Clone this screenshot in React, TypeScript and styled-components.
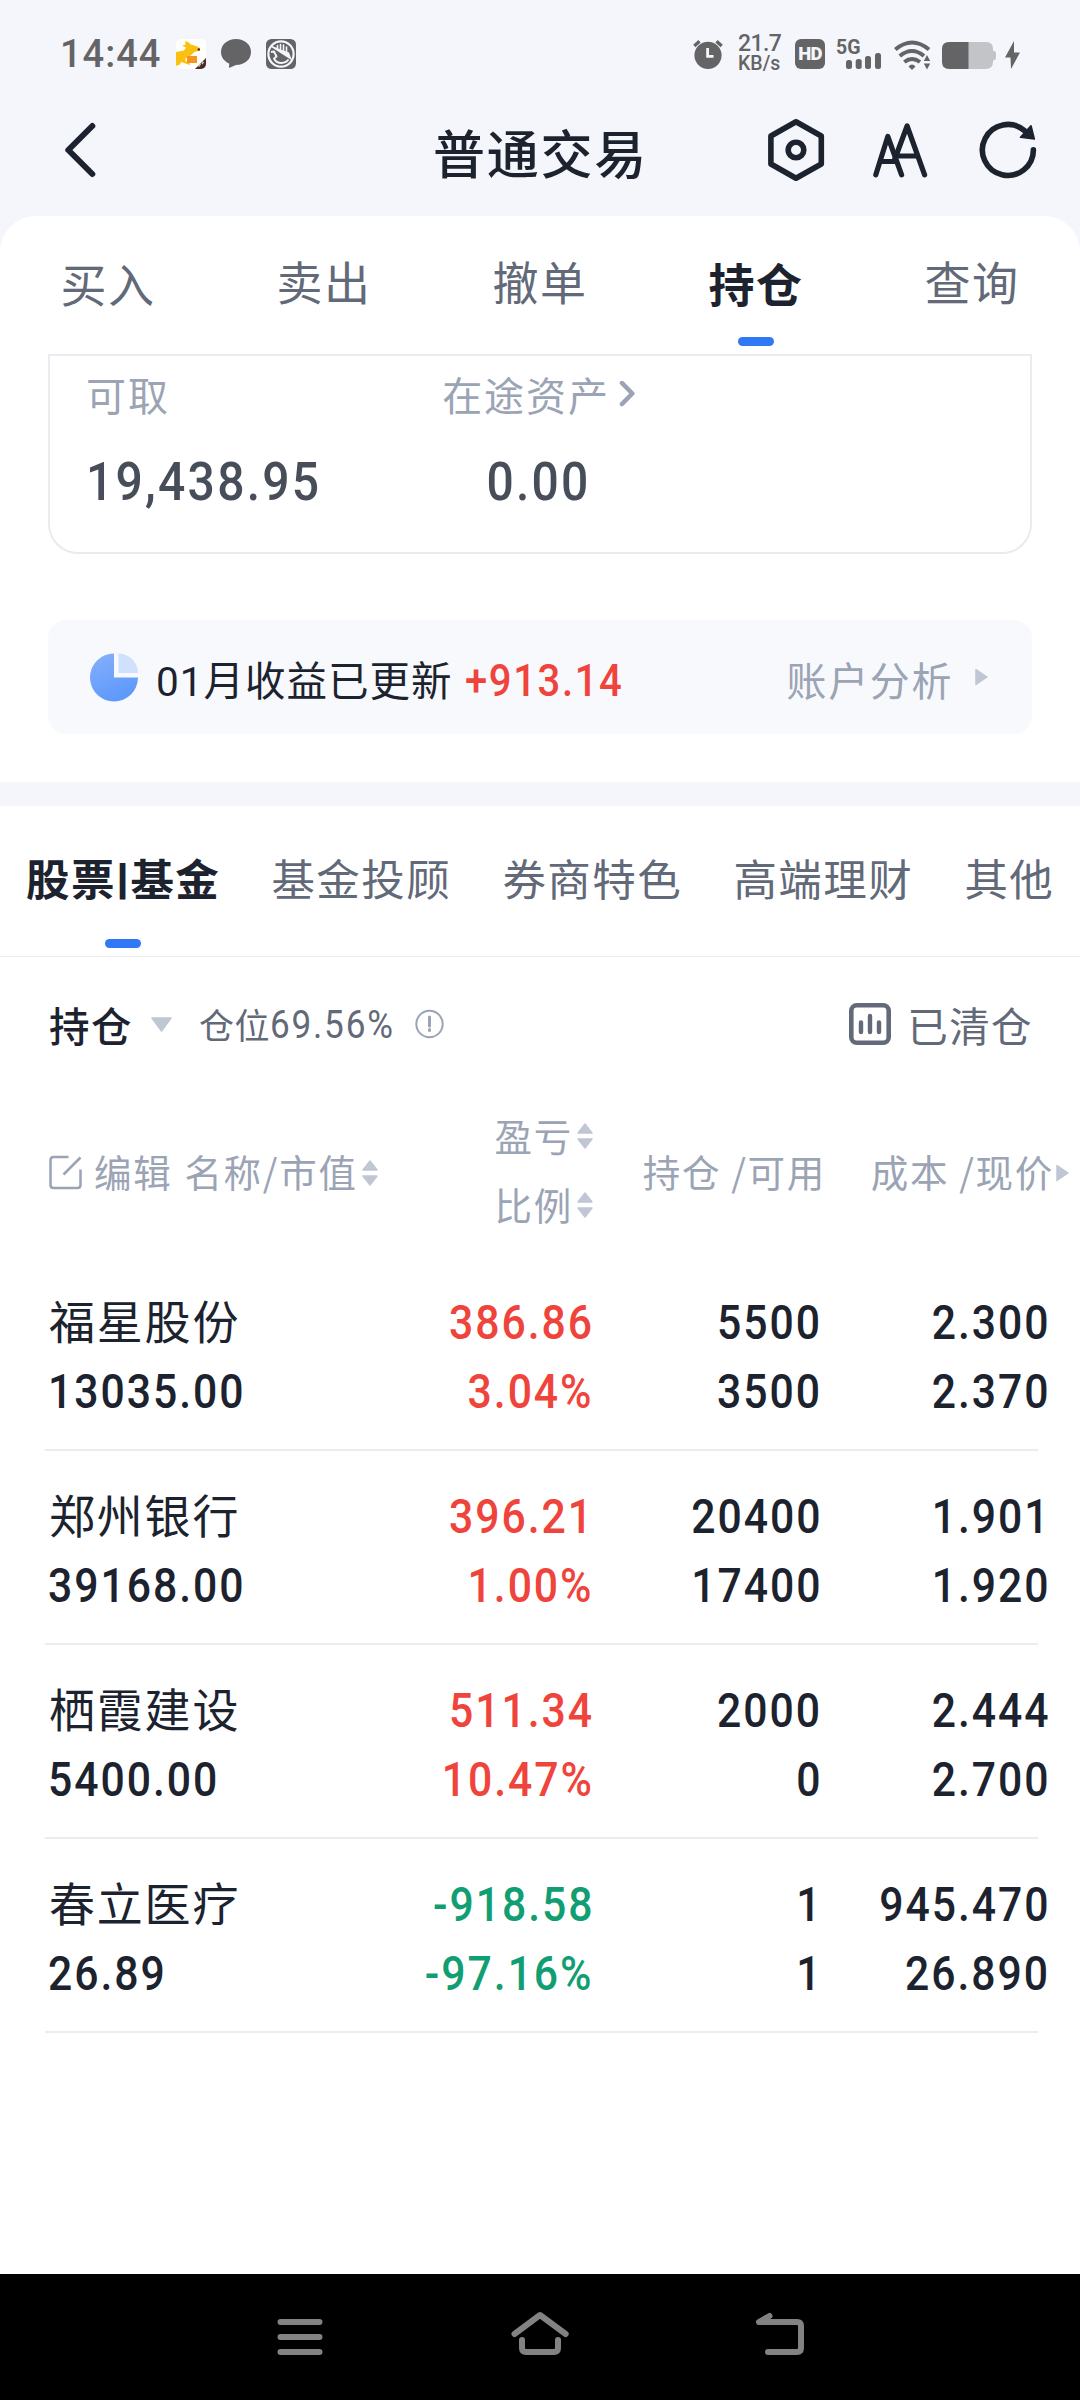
import React from "react";
import styled, { createGlobalStyle } from "styled-components";

const CJK = '"Noto Sans CJK SC", "Noto Sans", sans-serif';
const NUM = 'Roboto, "Noto Sans CJK SC", sans-serif';

const C = {
  bg: "#f4f6fb",
  ink: "#1c232f",
  mid: "#626978",
  soft: "#9ba4b5",
  faint: "#c0c6d3",
  line: "#ebecee",
  blue: "#3078f6",
  red: "#ef443c",
  green: "#119e72",
  status: "#646466",
};

const GlobalStyle = createGlobalStyle`
  * { box-sizing: border-box; }
  body { margin: 0; background: ${C.bg}; }
  svg { display: block; flex: none; }
`;

const Screen = styled.div`
  width: 1080px;
  height: 2400px;
  display: flex;
  flex-direction: column;
  overflow: hidden;
  background: ${C.bg};
  color: ${C.ink};
  font-family: ${CJK};
  white-space: nowrap;
`;

/* Narrow figures: Roboto condensed horizontally, anchored on one side. */
const Figure = styled.span<{ $from?: "left" | "center" | "right" }>`
  display: inline-block;
  transform: scaleX(0.89);
  transform-origin: ${(p) => p.$from ?? "left"} center;
`;

const StatusBar = styled.div`
  height: 108px;
  padding: 0 60px;
  display: flex;
  align-items: center;
  justify-content: space-between;
  color: ${C.status};
  font-family: ${NUM};
`;
const StatusGroup = styled.div`
  display: flex;
  align-items: center;
`;
const Time = styled.span`
  width: 116px;
  font-size: 38px;
  font-weight: 500;
  line-height: 44px;
  letter-spacing: 1px;
`;
const NoticeIcons = styled.div`
  display: flex;
  gap: 15px;
`;
const Speed = styled.div`
  width: 44px;
  margin: 0 13px 0 15px;
  display: flex;
  flex-direction: column;
  font-weight: 500;
  line-height: 20px;
`;
const SpeedValue = styled.span`
  font-size: 23px;
  letter-spacing: -0.6px;
`;
const SpeedUnit = styled.span`
  font-size: 19.5px;
`;
const HdBadge = styled.span`
  width: 30px;
  height: 30px;
  margin-right: 11px;
  border-radius: 6px;
  background: ${C.status};
  color: ${C.bg};
  font-size: 18.5px;
  font-weight: 900;
  line-height: 31px;
  text-align: center;
  letter-spacing: -0.8px;
`;

const Header = styled.header`
  height: 108px;
  padding: 0 40px 24px 60px;
  display: grid;
  grid-template-columns: 1fr auto 1fr;
  align-items: center;
`;
const Title = styled.h1`
  margin: 0;
  padding: 3px 19px 0 0;
  font-size: 52px;
  font-weight: 500;
  line-height: 64px;
  letter-spacing: 1.8px;
`;
const HeaderActions = styled.div`
  display: flex;
  justify-content: flex-end;
  gap: 46px;
`;

const Sheet = styled.main`
  flex: 1;
  border-radius: 36px 36px 0 0;
  background: #fff;
`;

const Tabs = styled.nav`
  height: 138px;
  display: grid;
  grid-template-columns: repeat(5, 1fr);
`;
const Tab = styled.div<{ $active?: boolean; $low?: boolean }>`
  padding-top: ${(p) => (p.$low ? 34 : 32)}px;
  display: flex;
  flex-direction: column;
  align-items: center;
  gap: 23px;
  font-size: 46px;
  line-height: 64px;
  letter-spacing: 1.6px;
  font-weight: ${(p) => (p.$active ? 700 : 400)};
  color: ${(p) => (p.$active ? C.ink : C.mid)};
`;
const Indicator = styled.i`
  width: 36px;
  height: 9px;
  border-radius: 5px;
  background: ${C.blue};
`;

const AssetCard = styled.section`
  height: 200px;
  margin: 0 48px;
  padding-top: 14px;
  border: 2px solid #e8ebef;
  border-radius: 0 0 30px 30px;
  display: grid;
  grid-template-columns: repeat(3, 1fr);
`;
const Asset = styled.div<{ $center?: boolean }>`
  padding-left: ${(p) => (p.$center ? 0 : 36)}px;
  padding-right: ${(p) => (p.$center ? 3 : 0)}px;
  display: flex;
  flex-direction: column;
  align-items: ${(p) => (p.$center ? "center" : "flex-start")};
  gap: 34px;
`;
const AssetLabel = styled.div`
  display: flex;
  align-items: center;
  gap: 9px;
  font-size: 40px;
  line-height: 48px;
  letter-spacing: 1.9px;
  color: ${C.soft};
`;
const AssetValue = styled.div`
  font: 500 54px/60px ${NUM};
  letter-spacing: 2.5px;
  color: #474e59;
`;

const Banner = styled.section`
  height: 114px;
  margin: 66px 48px 48px;
  padding: 0 44px 0 41px;
  border-radius: 18px;
  background: #f8f9fc;
  display: flex;
  align-items: center;
`;
const BannerText = styled.span`
  margin: 9px 0 0 18px;
  font: 400 40.5px/56px ${NUM};
  letter-spacing: 1px;
`;
const Profit = styled.span`
  flex: 1;
  margin: 8px 0 0 12px;
  font: 500 45px/56px ${NUM};
  letter-spacing: 1.8px;
  color: ${C.red};
`;
const BannerLink = styled.span`
  margin: 3px 22px 0 0;
  font-size: 40px;
  line-height: 56px;
  letter-spacing: 1.6px;
  color: ${C.soft};
`;

const Gap = styled.div`
  height: 24px;
  background: ${C.bg};
`;

const SubTabs = styled.nav`
  height: 151px;
  padding: 40px 0 0 26px;
  border-bottom: 1px solid #e9ebee;
  display: flex;
  gap: 51px;
`;
const SubTab = styled.div<{ $active?: boolean }>`
  display: flex;
  flex-direction: column;
  align-items: center;
  gap: 29px;
  font-size: 43.5px;
  line-height: 64px;
  letter-spacing: 1.5px;
  font-weight: ${(p) => (p.$active ? 700 : 400)};
  color: ${(p) => (p.$active ? C.ink : C.mid)};
`;
const Bar = styled.span`
  padding: 0 1.2px;
  font: 900 41px/1 Roboto, sans-serif;
  -webkit-text-stroke: 2px ${C.ink};
  vertical-align: 3px;
`;

const FilterRow = styled.div`
  height: 134px;
  padding: 0 47px 0 49px;
  display: flex;
  align-items: center;
`;
const FilterName = styled.span`
  margin: 2px 18px 0 0;
  font-size: 40.5px;
  line-height: 56px;
  letter-spacing: 1.5px;
  font-weight: 500;
`;
const Position = styled.span`
  flex: 1;
  margin-left: 27px;
  display: flex;
  align-items: center;
  font-size: 35px;
  line-height: 56px;
  letter-spacing: 0.6px;
  color: ${C.mid};
`;
const PositionValue = styled.span`
  width: 145px;
  margin-top: 2px;
  font: 400 39.5px/56px ${NUM};
  letter-spacing: 2px;
`;
const Cleared = styled.span`
  margin: 2px 0 0 16px;
  font-size: 40.5px;
  line-height: 56px;
  letter-spacing: 1.4px;
  color: ${C.mid};
`;

const TableHead = styled.div`
  height: 166px;
  padding: 0 0 7px 48px;
  display: grid;
  grid-template-columns: 340px 205px 233px 243px;
  align-items: center;
  font-size: 37.5px;
  line-height: 69px;
  letter-spacing: 1.7px;
  color: ${C.soft};
`;
const HeadCell = styled.div<{ $end?: boolean; $gap?: number }>`
  display: flex;
  align-items: center;
  justify-content: ${(p) => (p.$end ? "flex-end" : "flex-start")};
  gap: ${(p) => p.$gap ?? 4}px;
`;
const HeadStack = styled.div`
  margin-bottom: 4px;
`;
const IconDrop = styled.span<{ $y: number }>`
  padding-top: ${(p) => p.$y}px;
`;

const Row = styled.div`
  height: 194px;
  margin: 0 42px 0 45px;
  padding: 31px 0 0 3px;
  border-bottom: 2px solid ${C.line};
  display: grid;
  grid-template-columns: 340px 206px 228px 228px;
`;
const Cell = styled.div<{ $tone?: string; $end?: boolean }>`
  display: flex;
  flex-direction: column;
  align-items: ${(p) => (p.$end ? "flex-end" : "flex-start")};
  font: 500 48px/69px ${NUM};
  letter-spacing: 2.2px;
  color: ${(p) => p.$tone ?? C.ink};
`;
const StockName = styled.span`
  margin: 0 0 6px 1px;
  font: 400 46px/63px ${CJK};
  letter-spacing: 1.8px;
`;

const NavBar = styled.footer`
  height: 126px;
  background: #000;
  display: flex;
  align-items: center;
  justify-content: center;
  gap: 180px;
`;

const AppNoticeIcon = () => (
  <svg width="30" height="30" viewBox="0 0 30 30">
    <rect width="30" height="30" rx="5" fill="#fff" />
    <path d="M0 13 L8 11.500 L10 8.500 L6 6.500 L9.500 5.500 L9 2 Q13 2.500 15 5.500 L20 7 L24 9 L24 11.500 L18.500 13 L14 17 L9.500 19.500 L9.500 22 L14 24.500 L14 26 L5 23 L4 25.500 L0 27 Z" fill="#fbc111" />
    <rect x="11" y="17" width="10" height="7" fill="#f7941d" />
    <circle cx="22.800" cy="10.500" r="1.200" fill="#4a2c20" />
    <path d="M30 19 V25 A5 5 0 0 1 25 30 H19 Z" fill="#4a2c22" />
    <path d="M22.500 27.500 l2 -2.500 M26 25 l1.500 -2" stroke="#d9c6b8" strokeWidth="1.400" />
  </svg>
);
const ChatIcon = () => (
  <svg width="30" height="30" viewBox="0 0 30 30">
    <path d="M15 0 C23.500 0 30 5.500 30 13 C30 20.500 23.500 26 15 26 L8 29 L8.200 24.600 C3.200 22.500 0 18 0 13 C0 5.500 6.500 0 15 0 Z" fill={C.status} />
  </svg>
);
const HandIcon = () => (
  <svg width="30" height="30" viewBox="0 0 30 30" fill="none">
    <rect width="30" height="30" rx="5.500" fill={C.status} />
    <circle cx="15" cy="15" r="12.600" stroke="#f4f6fb" strokeWidth="2.200" />
    <path d="M5.500 7.500 L24.500 19.500 L22.500 14 L15 11.500 Z" fill="#f4f6fb" stroke="#f4f6fb" strokeWidth="1.400" />
    <path d="M11.500 10 V6.500 M14.500 12 V5.500 M17.500 14 V6 M20.500 15.500 V8" stroke="#f4f6fb" strokeWidth="1.600" strokeLinecap="round" />
    <path d="M5 13 L8 12.500 L10.500 17.500 L8 19.500 Q10 24 15.500 24 Q20.500 23.500 22.500 20.500" stroke="#f4f6fb" strokeWidth="1.900" strokeLinejoin="round" />
  </svg>
);
const AlarmIcon = () => (
  <svg width="30" height="30" viewBox="0 0 30 30" fill="none">
    <circle cx="15" cy="16.300" r="13.600" fill={C.status} />
    <path d="M1.300 7 L6.500 2.200 M28.700 7 L23.500 2.200" stroke={C.status} strokeWidth="3.400" />
    <path d="M14.600 9 V17.300 H20.500" stroke={C.bg} strokeWidth="2.800" />
  </svg>
);
const SignalIcon = () => (
  <svg width="46" height="36" viewBox="836 36 46 36" fill={C.status}>
    <text x="836" y="54" fontFamily="Roboto, sans-serif" fontWeight="700" fontSize="21" textLength="24.500" lengthAdjust="spacingAndGlyphs">5G</text>
    <rect x="846" y="60" width="6" height="9" rx="2.500" />
    <rect x="855.700" y="59" width="6" height="10" rx="2.500" />
    <rect x="865" y="56" width="6" height="13" rx="2.500" />
    <rect x="875" y="53" width="6" height="16" rx="2.500" />
  </svg>
);
const WifiIcon = () => (
  <svg width="38" height="36" viewBox="894 36 38 36" fill="none">
    <g stroke={C.status} strokeWidth="4">
      <path d="M895.300 49.500 Q912 35.500 929 49.500" />
      <path d="M899.800 56 Q912 46 924 56" />
      <path d="M904.300 62 Q912 56 920 62" />
    </g>
    <path d="M908.500 66.500 Q912 62.500 915.500 66.500 L912 70 Z" fill={C.status} />
    <path d="M923.800 61 L927 55 L930.200 61 Z M923.800 63.500 L927 69.500 L930.200 63.500 Z" fill={C.status} />
  </svg>
);
const BatteryIcon = () => (
  <svg width="54" height="36" viewBox="942 36 54 36">
    <path d="M968 42 H986 Q993 42 993 49 V50.500 Q996 51 996 53.500 V57.500 Q996 60 993 60.500 V62 Q993 69 986 69 H968 Z" fill="#c3c4c8" />
    <path d="M968.500 42 H949 Q942 42 942 49 V62 Q942 69 949 69 H968.500 Z" fill={C.status} />
  </svg>
);
const BoltIcon = () => (
  <svg width="15" height="36" viewBox="1005 36 15 36">
    <path d="M1014 41 L1005 57.500 H1010.500 L1011 69 L1020 52.500 H1014 Z" fill={C.status} />
  </svg>
);

const BackIcon = () => (
  <svg width="40" height="64" viewBox="60 118 40 64" fill="none">
    <path d="M92.300 126 L68.300 150 L92.300 174" stroke={C.ink} strokeWidth="6" strokeLinecap="round" strokeLinejoin="round" />
  </svg>
);
const SettingsIcon = () => (
  <svg width="60" height="64" viewBox="766 118 60 64" fill="none" stroke={C.ink} strokeWidth="5.600" strokeLinejoin="round">
    <path d="M796 121.800 L821.300 136 V164 L796 178.200 L770.900 164 V136 Z" />
    <circle cx="796" cy="150" r="7.800" />
  </svg>
);
const FontSizeIcon = () => (
  <svg width="58" height="64" viewBox="872 118 58 64" fill="none" stroke={C.ink} strokeWidth="5.200" strokeLinecap="round" strokeLinejoin="round">
    <path d="M875.800 174.800 L887.800 136.500 L901.600 174.800 M880.500 161.500 H896" />
    <path d="M894.500 160 L907.100 126 L924.600 174.800 M897.500 156 H917.500" />
  </svg>
);
const RefreshIcon = () => (
  <svg width="64" height="64" viewBox="976 118 64 64" fill="none">
    <path d="M1033.400 149.800 A25.500 25.500 0 1 1 1024.500 130.600" stroke={C.ink} strokeWidth="5.600" strokeLinecap="round" />
    <path d="M1031 125.800 L1034.300 139 L1020.500 137.300 Z" fill={C.ink} stroke={C.ink} strokeWidth="1.600" strokeLinejoin="round" />
  </svg>
);

const ChevronIcon = () => (
  <svg width="16" height="26" viewBox="0 0 16 26" fill="none">
    <path d="M3 2 L13.300 12.500 L3 23" stroke={C.soft} strokeWidth="4.600" strokeLinecap="round" strokeLinejoin="round" />
  </svg>
);
const PieIcon = () => (
  <svg width="49" height="49" viewBox="0 0 49 49">
    <defs>
      <linearGradient id="pie" x1="0" y1="0" x2="0.400" y2="1">
        <stop offset="0" stopColor="#86b0fb" />
        <stop offset="1" stopColor="#5f99fb" />
      </linearGradient>
    </defs>
    <path d="M25 0.500 A24 24 0 1 0 49 24.500 H25 Z" fill="url(#pie)" />
    <path d="M29.500 0.500 A19.500 19.500 0 0 1 49 20 H29.500 Z" fill="#d0e1fd" />
  </svg>
);
const RightTriangle = () => (
  <svg width="13" height="18" viewBox="0 0 13 18">
    <path d="M1 1.500 L12 9 L1 16.500 Z" fill={C.faint} stroke={C.faint} strokeWidth="1.500" strokeLinejoin="round" />
  </svg>
);
const DownTriangle = () => (
  <svg width="21" height="15" viewBox="0 0 21 15">
    <path d="M1 1 H20 L10.500 14 Z" fill={C.faint} stroke={C.faint} strokeWidth="1.500" strokeLinejoin="round" />
  </svg>
);
const SortIcon = () => (
  <svg width="16" height="26" viewBox="0 0 16 26" fill={C.faint} stroke={C.faint} strokeWidth="1.400" strokeLinejoin="round">
    <path d="M1 10 L8 1 L15 10 Z M1 16 L8 25 L15 16 Z" />
  </svg>
);
const InfoIcon = () => (
  <svg width="29" height="30" viewBox="0 0 29 30" fill="none" stroke={C.soft}>
    <circle cx="14.500" cy="15" r="13.200" strokeWidth="2" />
    <path d="M14.500 8 V17 M14.500 20.500 V21.500" strokeWidth="3" strokeLinecap="round" />
  </svg>
);
const ChartIcon = () => (
  <svg width="42" height="42" viewBox="0 0 42 42" fill="none" stroke={C.mid}>
    <rect x="2.300" y="2.300" width="37.400" height="37.400" rx="5.500" strokeWidth="4.600" />
    <path d="M12 19.500 V29 M21 13 V29 M30 19.500 V29" strokeWidth="4.400" strokeLinecap="round" />
  </svg>
);
const EditIcon = () => (
  <svg width="34" height="35" viewBox="0 0 34 35" fill="none" stroke={C.soft} strokeWidth="2.500">
    <path d="M20.500 2 H5.500 Q2.500 2 2.500 5 V30 Q2.500 33 5.500 33 H29.500 Q32.500 33 32.500 30 V14.500" />
    <path d="M15.500 19.500 L32.500 2.500" />
  </svg>
);

const MenuIcon = () => (
  <svg width="60" height="60" viewBox="270 2307 60 60" stroke="#828282" strokeWidth="6" strokeLinecap="round">
    <path d="M280.500 2322 H319.500 M280.500 2337 H319.500 M280.500 2352 H319.500" />
  </svg>
);
const HomeIcon = () => (
  <svg width="60" height="60" viewBox="510 2307 60 60" fill="none" stroke="#828282" strokeWidth="6" strokeLinecap="round" strokeLinejoin="round">
    <path d="M514.500 2334 L540 2315 L565.700 2334" />
    <path d="M522 2340 V2348 Q522 2352 526 2352 H554 Q558 2352 558 2348 V2340" />
  </svg>
);
const ReturnIcon = () => (
  <svg width="60" height="60" viewBox="750 2307 60 60" fill="none" stroke="#828282" strokeWidth="6" strokeLinecap="round" strokeLinejoin="round">
    <path d="M769.500 2316 L759 2322 H797 Q801 2322 801 2326 V2348 Q801 2352 797 2352 H768" />
  </svg>
);

const TABS = [
  { label: "买入", low: true },
  { label: "卖出" },
  { label: "撤单" },
  { label: "持仓", low: true, active: true },
  { label: "查询" },
];
const SUB_TABS = ["基金投顾", "券商特色", "高端理财", "其他"];

type Holding = {
  name: string;
  value: string;
  profit: string;
  ratio: string;
  held: string;
  usable: string;
  cost: string;
  price: string;
};
const HOLDINGS: Holding[] = [
  { name: "福星股份", value: "13035.00", profit: "386.86", ratio: "3.04%", held: "5500", usable: "3500", cost: "2.300", price: "2.370" },
  { name: "郑州银行", value: "39168.00", profit: "396.21", ratio: "1.00%", held: "20400", usable: "17400", cost: "1.901", price: "1.920" },
  { name: "栖霞建设", value: "5400.00", profit: "511.34", ratio: "10.47%", held: "2000", usable: "0", cost: "2.444", price: "2.700" },
  { name: "春立医疗", value: "26.89", profit: "-918.58", ratio: "-97.16%", held: "1", usable: "1", cost: "945.470", price: "26.890" },
];

const Sort = () => (
  <IconDrop $y={4}>
    <SortIcon />
  </IconDrop>
);

const FigurePair = ({ top, bottom, tone }: { top: string; bottom: string; tone?: string }) => (
  <Cell $end $tone={tone}>
    <Figure $from="right">{top}</Figure>
    <Figure $from="right">{bottom}</Figure>
  </Cell>
);

const HoldingRow = ({ item }: { item: Holding }) => (
  <Row>
    <Cell>
      <StockName>{item.name}</StockName>
      <Figure>{item.value}</Figure>
    </Cell>
    <FigurePair top={item.profit} bottom={item.ratio} tone={item.profit.startsWith("-") ? C.green : C.red} />
    <FigurePair top={item.held} bottom={item.usable} />
    <FigurePair top={item.cost} bottom={item.price} />
  </Row>
);

const Spaced = styled.span<{ $l: number }>`
  margin-left: ${(p) => p.$l}px;
`;

export default function App() {
  return (
    <>
      <GlobalStyle />
      <Screen>
        <StatusBar>
          <StatusGroup>
            <Time>14:44</Time>
            <NoticeIcons>
              <AppNoticeIcon />
              <ChatIcon />
              <HandIcon />
            </NoticeIcons>
          </StatusGroup>
          <StatusGroup>
            <AlarmIcon />
            <Speed>
              <SpeedValue>21.7</SpeedValue>
              <SpeedUnit>KB/s</SpeedUnit>
            </Speed>
            <HdBadge>HD</HdBadge>
            <SignalIcon />
            <Spaced $l={12}><WifiIcon /></Spaced>
            <Spaced $l={10}><BatteryIcon /></Spaced>
            <Spaced $l={9}><BoltIcon /></Spaced>
          </StatusGroup>
        </StatusBar>

        <Header>
          <BackIcon />
          <Title>普通交易</Title>
          <HeaderActions>
            <SettingsIcon />
            <FontSizeIcon />
            <RefreshIcon />
          </HeaderActions>
        </Header>

        <Sheet>
          <Tabs>
            {TABS.map((t) => (
              <Tab key={t.label} $active={t.active} $low={t.low}>
                {t.label}
                {t.active && <Indicator />}
              </Tab>
            ))}
          </Tabs>

          <AssetCard>
            <Asset>
              <AssetLabel>可取</AssetLabel>
              <AssetValue>
                <Figure>19,438.95</Figure>
              </AssetValue>
            </Asset>
            <Asset $center>
              <AssetLabel>
                在途资产
                <ChevronIcon />
              </AssetLabel>
              <AssetValue>
                <Figure $from="center">0.00</Figure>
              </AssetValue>
            </Asset>
          </AssetCard>

          <Banner>
            <PieIcon />
            <BannerText>01月收益已更新</BannerText>
            <Profit>
              <Figure>+913.14</Figure>
            </Profit>
            <BannerLink>账户分析</BannerLink>
            <RightTriangle />
          </Banner>

          <Gap />

          <SubTabs>
            <SubTab $active>
              <span>
                股票<Bar>|</Bar>基金
              </span>
              <Indicator />
            </SubTab>
            {SUB_TABS.map((t) => (
              <SubTab key={t}>{t}</SubTab>
            ))}
          </SubTabs>

          <FilterRow>
            <FilterName>持仓</FilterName>
            <DownTriangle />
            <Position>
              仓位
              <PositionValue>
                <Figure>69.56%</Figure>
              </PositionValue>
              <InfoIcon />
            </Position>
            <ChartIcon />
            <Cleared>已清仓</Cleared>
          </FilterRow>

          <TableHead>
            <HeadCell $gap={12}>
              <IconDrop $y={4}>
                <EditIcon />
              </IconDrop>
              <span>编辑</span>
              <HeadCell>
                名称/市值
                <Sort />
              </HeadCell>
            </HeadCell>
            <HeadStack>
              <HeadCell $end>
                盈亏
                <Sort />
              </HeadCell>
              <HeadCell $end>
                比例
                <Sort />
              </HeadCell>
            </HeadStack>
            <HeadCell $end>持仓 /可用</HeadCell>
            <HeadCell $end $gap={2}>
              成本 /现价
              <IconDrop $y={5}>
                <RightTriangle />
              </IconDrop>
            </HeadCell>
          </TableHead>

          {HOLDINGS.map((h) => (
            <HoldingRow key={h.name} item={h} />
          ))}
        </Sheet>

        <NavBar>
          <MenuIcon />
          <HomeIcon />
          <ReturnIcon />
        </NavBar>
      </Screen>
    </>
  );
}
